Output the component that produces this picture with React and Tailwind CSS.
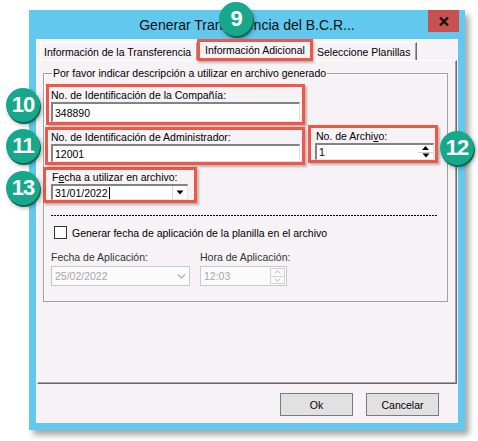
import React from "react";

const sunken =
  "bg-white border-t-2 border-l-2 border-t-[#838383] border-l-[#838383] border-r border-b border-r-[#e3e3e3] border-b-[#e3e3e3]";

function Badge({ n, className }) {
  return (
    <div
      className={
        "absolute w-[34px] h-[34px] rounded-full bg-[#17a88b] text-white font-bold text-[22px] tracking-[-1px] flex items-center justify-center shadow-[1px_2px_0_#0b6a57,2px_3px_4px_rgba(0,0,0,0.35)] font-['Liberation_Sans',Arial,sans-serif] " +
        className
      }
    >
      {n}
    </div>
  );
}

function DownTri() {
  return (
    <svg width="8" height="5" viewBox="0 0 8 5">
      <path d="M0.5 0.5 L7.5 0.5 L4 4.5 Z" fill="#000" />
    </svg>
  );
}

function UpTri() {
  return (
    <svg width="7" height="4" viewBox="0 0 7 4">
      <path d="M0 4 L7 4 L3.5 0 Z" fill="#000" />
    </svg>
  );
}

function Chev({ up, color = "#b0b0b0", w = 9, h = 5 }) {
  return (
    <svg width={w} height={h} viewBox="0 0 9 5">
      <path
        d={up ? "M1 4.5 L4.5 1 L8 4.5" : "M1 0.5 L4.5 4 L8 0.5"}
        fill="none"
        stroke={color}
        strokeWidth="1.2"
      />
    </svg>
  );
}

export default function App() {
  return (
    <div className="relative w-[478px] h-[441px] bg-white overflow-hidden font-['Liberation_Sans',Arial,sans-serif] text-[10.5px] leading-[14px] text-black whitespace-nowrap">
      {/* window */}
      <div className="ml-[29px] mt-[10px] w-[436px] h-[420px] bg-[#62c8ee] flex flex-col shadow-[4px_5px_6px_rgba(0,0,0,0.35)]">
        {/* title bar */}
        <div className="h-[29px] flex items-start shrink-0">
          <div className="w-[37px]" />
          <div className="flex-1 h-full flex items-center justify-center text-[14px] text-[#111] pt-[1px]">
            Generar Transferencia del B.C.R...
          </div>
          <div className="w-[31px] h-[22px] mr-[6px] bg-[#c75050] flex items-center justify-center">
            <svg width="10" height="9" viewBox="0 0 10 9">
              <path d="M1 0.5 L9 8.5 M9 0.5 L1 8.5" stroke="#111" strokeWidth="2.3" />
            </svg>
          </div>
        </div>

        {/* client */}
        <div className="flex-1 mx-[7px] mb-[7px] bg-[#f6f2f6] flex flex-col">
          {/* tabs */}
          <div className="h-[21px] flex items-end pl-[4px] shrink-0">
            <div className="w-[157px] h-[18px] border-t border-l border-t-white border-l-white border-r border-r-[#a0a0a0] flex items-center pl-[3px] overflow-hidden">
              Información de la Transferencia
            </div>
            <div className="relative z-10 w-[116px] h-[22px] mb-[-1px] border-[3px] border-[#f05748] bg-[#f6f2f6] flex items-center pl-[5px] shadow-[1px_2px_2px_rgba(0,0,0,0.25)] overflow-hidden">
              Información Adicional
            </div>
            <div className="w-[104px] h-[18px] border-t border-t-white border-r border-r-[#696969] shadow-[inset_-1px_0_0_#a0a0a0] flex items-center pl-[4px] overflow-hidden">
              Seleccione Planillas
            </div>
          </div>

          {/* panel */}
          <div className="mx-[1px] h-[324px] shrink-0 border-t border-l border-t-white border-l-white border-r border-b border-r-[#696969] border-b-[#696969] shadow-[inset_-1px_-1px_0_#a0a0a0] pl-[5px] pt-[12px]">
            {/* group box */}
            <div className="relative w-[405px] h-[229px] border border-[#a0a0a0] shadow-[inset_1px_1px_0_#fff]">
              <div className="absolute -top-[8px] left-[8px] px-[1px] bg-[#f6f2f6]">
                Por favor indicar descripción a utilizar en archivo generado
              </div>

              {/* box 10 */}
              <div className="ml-[2px] mt-[10px] w-[259px] h-[41px] border-[3px] border-[#f05748] px-[2px] pt-[1px] shadow-[2px_2px_2px_rgba(0,0,0,0.25)]">
                <div className="h-[14px]">No. de Identificación de la Compañía:</div>
                <div className={sunken + " h-[20px] flex items-center pl-[2px]"}>348890</div>
              </div>

              {/* row 2 */}
              <div className="flex items-start">
                <div className="ml-[1px] mt-[2px] w-[260px] h-[38px] border-[3px] border-[#f05748] pl-[3px] pr-[2px] shadow-[2px_2px_2px_rgba(0,0,0,0.25)]">
                  <div className="h-[14px]">No. de Identificación de Administrador:</div>
                  <div className={sunken + " h-[18px] flex items-center pl-[2px]"}>12001</div>
                </div>
                <div className="ml-[3px] w-[130px] h-[38px] border-[3px] border-[#f05748] pl-[4px] pr-[1px] pt-[1px] shadow-[2px_2px_2px_rgba(0,0,0,0.25)]">
                  <div className="h-[14px] pl-[1px]">
                    No. de Archi<span className="underline">v</span>o:
                  </div>
                  <div className={sunken + " h-[17px] flex items-center"}>
                    <div className="flex-1 pl-[2px] flex items-center">1</div>
                    <div className="w-[15px] h-full flex flex-col">
                      <div className="flex-1 flex items-center justify-center border-b border-b-[#d0d0d0]">
                        <UpTri />
                      </div>
                      <div className="flex-1 flex items-center justify-center">
                        <DownTri />
                      </div>
                    </div>
                  </div>
                </div>
              </div>

              {/* box 13 */}
              <div className="-ml-[1px] mt-[2px] w-[154px] h-[36px] border-[3px] border-[#f05748] pl-[5px] pr-[6px] shadow-[2px_2px_2px_rgba(0,0,0,0.25)]">
                <div className="h-[14px] pl-[1px]">
                  F<span className="underline">e</span>cha a utilizar en archivo:
                </div>
                <div className={sunken + " h-[16px] flex items-center"}>
                  <div className="flex-1 pl-[2px] flex items-center">
                    31/01/2022<span className="inline-block w-[1px] h-[12px] bg-black ml-[1px]" />
                  </div>
                  <div className="w-[15px] h-full border-l border-l-[#d8d8d8] flex items-center justify-center">
                    <DownTri />
                  </div>
                </div>
              </div>

              {/* dashed line */}
              <div className="ml-[7px] mt-[12px] w-[387px] h-[1px] bg-[repeating-linear-gradient(90deg,#000_0_2px,transparent_2px_3px)]" />

              {/* checkbox */}
              <div className="mt-[10px] h-[13px] flex items-center">
                <div className="ml-[10px] w-[13px] h-[13px] border border-[#333] bg-white" />
                <div className="ml-[5px]">Generar fecha de aplicación de la planilla en el archivo</div>
              </div>

              {/* disabled fields */}
              <div className="mt-[11px] ml-[7px] flex">
                <div className="w-[139px]">
                  <div className="h-[14px] text-[#333]">Fecha de Aplicación:</div>
                  <div className="mt-[2px] h-[20px] border border-[#c9c9c9] bg-[#fbfafb] flex items-center">
                    <div className="flex-1 pl-[3px] text-[#a8a8a8]">25/02/2022</div>
                    <div className="w-[16px] flex items-center justify-center">
                      <Chev />
                    </div>
                  </div>
                </div>
                <div className="ml-[10px] w-[87px]">
                  <div className="h-[14px] text-[#333]">Hora de Aplicación:</div>
                  <div className="mt-[2px] h-[20px] border border-[#c9c9c9] bg-[#fbfafb] flex items-center">
                    <div className="flex-1 pl-[3px] text-[#a8a8a8]">12:03</div>
                    <div className="w-[16px] h-full flex flex-col py-[1px] pr-[1px]">
                      <div className="flex-1 border border-[#d4d4d4] flex items-center justify-center">
                        <Chev up w={7} h={4} />
                      </div>
                      <div className="flex-1 border border-[#d4d4d4] border-t-0 flex items-center justify-center">
                        <Chev w={7} h={4} />
                      </div>
                    </div>
                  </div>
                </div>
              </div>
            </div>
          </div>

          {/* buttons */}
          <div className="mt-[9px] h-[23px] flex justify-end gap-[13px] pr-[19px] shrink-0">
            <button className="w-[73px] h-[23px] bg-[#e1e1e1] border border-[#7a7a7a] flex items-center justify-center">
              Ok
            </button>
            <button className="w-[73px] h-[23px] bg-[#e1e1e1] border border-[#7a7a7a] flex items-center justify-center">
              Cancelar
            </button>
          </div>
        </div>
      </div>

      <Badge n="9" className="left-[219px] top-[2px]" />
      <Badge n="10" className="left-[6px] top-[88px]" />
      <Badge n="11" className="left-[6px] top-[129px]" />
      <Badge n="13" className="left-[6px] top-[171px]" />
      <Badge n="12" className="left-[440px] top-[131px]" />
    </div>
  );
}
